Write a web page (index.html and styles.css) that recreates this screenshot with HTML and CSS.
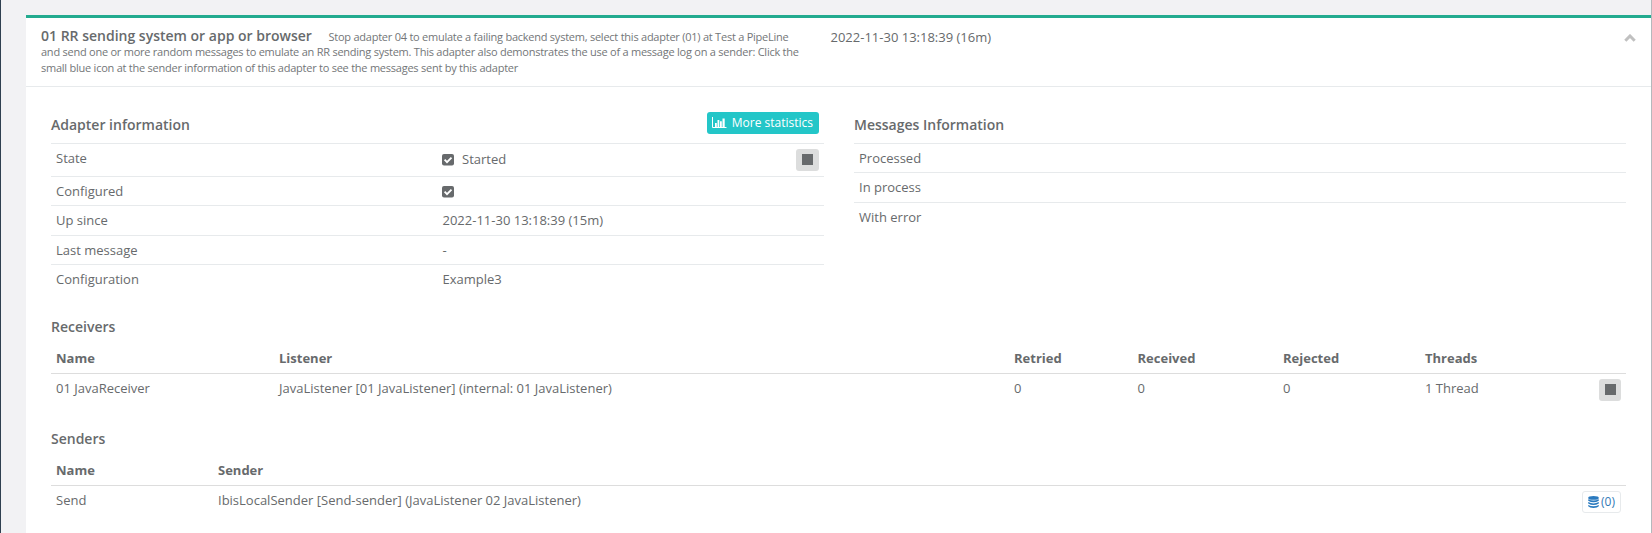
FILE: index.html
```html
<!DOCTYPE html>
<html lang="en">
<head>
<meta charset="utf-8">
<title>Adapter status</title>
<link rel="stylesheet" href="styles.css">
</head>
<body>
<main class="page">
  <section class="ibox">
    <header class="ibox-title">
      <h5 class="adapter-name">01 RR sending system or app or browser <small>Stop adapter 04 to emulate a failing backend system, select this adapter (01) at Test a PipeLine<br>and send one or more random messages to emulate an RR sending system. This adapter also demonstrates the use of a message log on a sender: Click the<br>small blue icon at the sender information of this adapter to see the messages sent by this adapter</small></h5>
      <span class="uptime">2022-11-30 13:18:39 (16m)</span>
      <svg class="chevron" viewBox="0 0 12 8"><path d="M1.300 6.700 6 2 10.700 6.700" fill="none" stroke="#c0c0c0" stroke-width="3"/></svg>
    </header>
    <div class="ibox-content">
      <div class="columns">
        <div class="column">
          <div class="column-head">
            <h3>Adapter information</h3>
            <a class="btn btn-info"><svg class="icon-chart" viewBox="0 0 15 12"><path d="M.5 0V10.500H14.500" fill="none" stroke="#fff"/><path d="M3 6h1.800v4H3zM5.500 3h1.800v7H5.500zM8 4.200h1.800V10H8zM10.500 1.500h2.200V10h-2.200z" fill="#fff"/></svg>More statistics</a>
          </div>
          <table class="table info">
            <tr><td>State</td><td><div class="state"><svg class="check" viewBox="0 0 12 12"><rect width="12" height="11.500" rx="2" fill="#676a6c"/><path d="M2.600 5.700 5 8.100 9.500 3.600" fill="none" stroke="#fff" stroke-width="1.900"/></svg><span class="state-text">Started</span><button class="btn-stop"><i></i></button></div></td></tr>
            <tr><td>Configured</td><td><svg class="check" viewBox="0 0 12 12"><rect width="12" height="11.500" rx="2" fill="#676a6c"/><path d="M2.600 5.700 5 8.100 9.500 3.600" fill="none" stroke="#fff" stroke-width="1.900"/></svg></td></tr>
            <tr class="tall"><td>Up since</td><td>2022-11-30 13:18:39 (15m)</td></tr>
            <tr><td>Last message</td><td>-</td></tr>
            <tr><td>Configuration</td><td>Example3</td></tr>
          </table>
        </div>
        <div class="column">
          <div class="column-head"><h3>Messages Information</h3></div>
          <table class="table info">
            <tr><td>Processed</td><td></td></tr>
            <tr class="tall"><td>In process</td><td></td></tr>
            <tr><td>With error</td><td></td></tr>
          </table>
        </div>
      </div>
      <h3 class="section">Receivers</h3>
      <table class="table list">
        <colgroup><col class="r-name"><col class="r-listener"><col class="r-retried"><col class="r-received"><col class="r-rejected"><col></colgroup>
        <thead><tr><th>Name</th><th>Listener</th><th>Retried</th><th>Received</th><th>Rejected</th><th>Threads</th></tr></thead>
        <tbody><tr><td>01 JavaReceiver</td><td>JavaListener [01 JavaListener] (internal: 01 JavaListener)</td><td>0</td><td>0</td><td>0</td><td><div class="split"><span>1 Thread</span><button class="btn-stop"><i></i></button></div></td></tr></tbody>
      </table>
      <h3 class="section senders">Senders</h3>
      <table class="table list">
        <colgroup><col class="s-name"><col></colgroup>
        <thead><tr><th>Name</th><th>Sender</th></tr></thead>
        <tbody><tr><td>Send</td><td><div class="split"><span>IbisLocalSender [Send-sender] (JavaListener 02 JavaListener)</span><a class="btn-log"><svg class="icon-db" viewBox="0 0 11 12"><g fill="#2a7abf"><ellipse cx="5.500" cy="1.900" rx="5.300" ry="1.900"/><path d="M.2 3.200Q5.500 6 10.800 3.200V4.700Q5.500 7.800 .2 4.700zM.2 6.100Q5.500 8.800 10.800 6.100V7.500Q5.500 10.600 .2 7.500zM.2 8.900Q5.500 11.500 10.800 8.900V10.200Q9.500 12 5.500 12T.2 10.200z"/></g></svg><span>(0)</span></a></div></td></tr></tbody>
      </table>
    </div>
  </section>
</main>
</body>
</html>
```
FILE: styles.css
```css
* { box-sizing: border-box; }
body {
  margin: 0;
  height: 533px;
  overflow: hidden;
  background: #f2f2f4;
  color: #676a6c;
  font: 13px/18px "Open Sans", sans-serif;
}
h3, h5 { margin: 0; font-size: 14px; font-weight: 600; }
.page {
  height: 533px;
  padding: 15px 0 0 25px;
  border-left: 1px solid #2f4050;
  border-right: 1px solid #b5b8bc;
}
.ibox { height: 518px; background: #fff; border-top: 3px solid #23ab8f; }
.ibox-title {
  display: flex;
  align-items: flex-start;
  height: 69px;
  padding: 10px 15px 0;
  border-bottom: 1px solid #e7eaec;
}
.adapter-name { width: 789.5px; padding-top: 0.8px; line-height: 14.6px; white-space: nowrap; }
.adapter-name small { font-size: 11px; font-weight: 400; letter-spacing: -0.24px; color: #737678; }
.adapter-name small::before { content: ""; display: inline-block; width: 13px; }
.uptime { flex: 1; }
.chevron { width: 12px; height: 8px; margin-top: 6px; }
.ibox-content { padding: 20px 25px 0; }
.columns { display: grid; grid-template-columns: 773px 772px; gap: 30px; height: 207px; }
.column-head {
  display: flex;
  justify-content: space-between;
  height: 36px;
  padding: 5px 5px 0 0;
}
.column-head h3 { padding-top: 4px; }
.btn {
  display: flex;
  align-items: center;
  height: 22px;
  padding: 0 6px 0 5px;
  border-radius: 3px;
  background: #23c6c8;
  color: #fff;
  font-size: 12px;
}
.icon-chart { width: 15px; height: 12px; margin-right: 5px; }
.table { width: 100%; table-layout: fixed; border-collapse: separate; border-spacing: 0; }
.table td { height: 29px; padding: 5px; border-top: 1px solid #e7eaec; vertical-align: top; }
.table .tall td { height: 30px; }
.table th { padding: 4px 5px 6px; border-bottom: 1px solid #ddd; text-align: left; font-weight: 700; }
.table.list td { border-top: 0; }
.check { display: block; width: 12px; height: 12px; margin: 4px 0 0 -0.5px; }
.state, .split { display: flex; align-items: flex-start; }
.state-text { flex: 1; padding: 1px 0 0 8px; }
.state .check { margin-top: 5px; }
.split { justify-content: space-between; }
.btn-stop {
  display: grid;
  place-items: center;
  width: 22px;
  height: 22px;
  padding: 0 0 1px;
  border: 0;
  border-radius: 3px;
  background: #dcdddd;
}
.state .btn-stop { width: 23px; }
.btn-stop i { width: 11px; height: 11px; background: #676a6c; }
.section { padding-top: 4px; height: 31px; }
.senders { margin-top: 20px; }
.r-name { width: 223px; }
.r-listener { width: 735px; }
.r-retried { width: 123.500px; }
.r-received { width: 145.500px; }
.r-rejected { width: 142px; }
.s-name { width: 162px; }
.btn-log {
  display: flex;
  align-items: center;
  gap: 2px;
  width: 39px;
  height: 22px;
  padding-left: 5px;
  border: 1px solid #e7eaec;
  border-radius: 3px;
  color: #337ab7;
  font-size: 12px;
}
.icon-db { width: 11px; height: 12px; }
```
